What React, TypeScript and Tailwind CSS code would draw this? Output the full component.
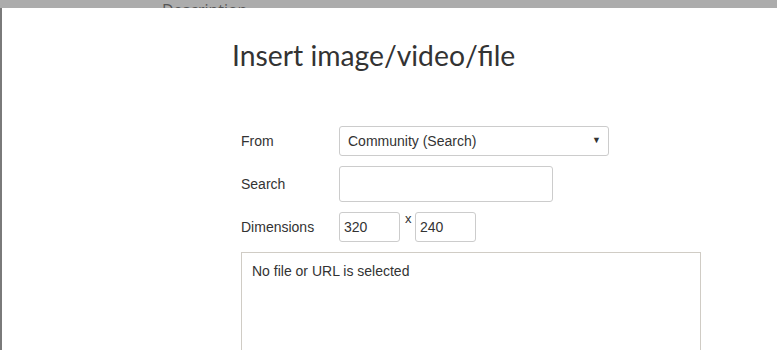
import React from "react";

export default function App() {
  const arial = { fontFamily: '"Liberation Sans", Arial, sans-serif' };
  return (
    <div className="w-[777px] h-[350px] overflow-hidden bg-white flex flex-col">
      <div className="h-[8px] bg-[#acacac] overflow-hidden shrink-0 relative">
        <div
          className="absolute left-[162px] top-[0px] text-[16px] leading-[20px] text-[#555]"
          style={{ fontFamily: '"Open Sans", sans-serif' }}
        >
          Description
        </div>
      </div>
      <div className="flex flex-1">
        <div className="w-[2px] bg-[#7a7a7a] shrink-0" />
        <div className="flex-1 bg-white pl-[230px]">
          <h1
            className="mt-[27px] text-[28.3px] leading-[40px] text-[#333] font-normal"
            style={{ fontFamily: 'Lato, "Open Sans", sans-serif' }}
          >
            Insert image/video/file
          </h1>
          <div className="pl-[9px] mt-[51px] text-[14px] text-[#333]" style={arial}>
            <div className="flex items-center h-[30px]">
              <div className="w-[98px]">From</div>
              <div className="w-[270px] h-[30px] border border-[#ccc] rounded-[3px] flex items-center justify-between pl-[8px] pr-[7px]">
                <span>Community (Search)</span>
                <span className="text-[9px] text-[#333]">▼</span>
              </div>
            </div>
            <div className="flex items-center h-[36px] mt-[10px]">
              <div className="w-[98px]">Search</div>
              <div className="w-[214px] h-[36px] border border-[#ccc] rounded-[3px]" />
            </div>
            <div className="flex items-center h-[30px] mt-[10px]">
              <div className="w-[98px]">Dimensions</div>
              <div className="w-[61px] h-[30px] border border-[#ccc] rounded-[3px] flex items-center pl-[4px]">320</div>
              <div className="w-[15px] self-start pl-[5px] leading-[14px] text-[13px]">x</div>
              <div className="w-[61px] h-[30px] border border-[#ccc] rounded-[3px] flex items-center pl-[4px]">240</div>
            </div>
            <div className="mt-[10px] w-[460px] h-[120px] border border-[#d0ccc5] px-[10px] pt-[8px]">
              No file or URL is selected
            </div>
          </div>
        </div>
      </div>
    </div>
  );
}
